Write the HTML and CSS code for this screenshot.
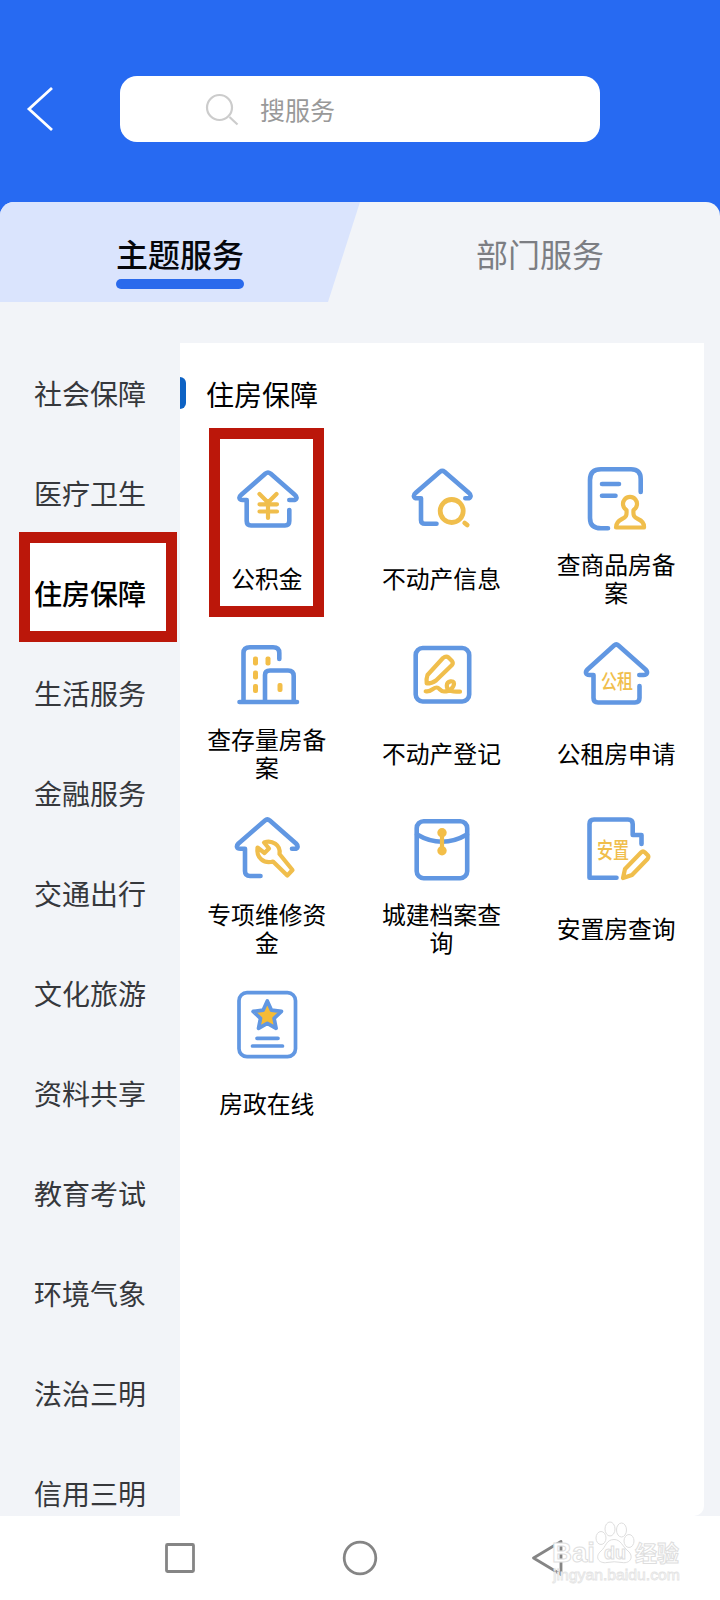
FILE: index.html
```html
<!DOCTYPE html>
<html lang="zh-CN">
<head>
<meta charset="utf-8">
<title>主题服务</title>
<link rel="stylesheet" href="styles.css">
</head>
<body>
<div class="screen">
  <header class="header">
    <svg class="back" width="30" height="46" viewBox="0 0 30 46"><path d="M27 2 4 23 27 44"/></svg>
    <div class="search">
      <svg class="search-icon" width="34" height="34" viewBox="0 0 34 34"><circle cx="14.500" cy="15.500" r="12.500"/><path d="m24.500 25 8 7.500"/></svg>
      <span>搜服务</span>
    </div>
  </header>
  <nav class="tabs">
    <svg class="tab-shape" width="360" height="100" viewBox="0 0 360 100"><path d="M0 0H360L328 100H0Z"/></svg>
    <div class="tab active"><span>主题服务</span></div>
    <div class="tab"><span>部门服务</span></div>
  </nav>
  <main class="content">
    <aside class="sidebar">
      <div class="cat">社会保障</div>
      <div class="cat">医疗卫生</div>
      <div class="cat selected"><span class="mark mark-cat"></span><b>住房保障</b></div>
      <div class="cat">生活服务</div>
      <div class="cat">金融服务</div>
      <div class="cat">交通出行</div>
      <div class="cat">文化旅游</div>
      <div class="cat">资料共享</div>
      <div class="cat">教育考试</div>
      <div class="cat">环境气象</div>
      <div class="cat">法治三明</div>
      <div class="cat">信用三明</div>
    </aside>
    <section class="panel">
      <h2 class="title">住房保障</h2>
      <div class="grid">
        <div class="item"><span class="mark mark-item"></span>
          <svg class="icon" viewBox="0 0 80 80"><path d="M62.300 41H66C70 41 70.500 38 68 36L43.500 14.500Q41 12.500 38.500 14.500L14 36C11.500 38 12 41 15.500 41H19.700V62Q19.700 66.500 24 66.500H58Q62.300 66.500 62.300 62V51"/><path class="y" d="m32.500 35 8.500 8.500 8.500-8.500M32.500 45.300H50M32.500 52.500H50M41 44V59"/></svg>
          <p>公积金</p></div>
        <div class="item">
          <svg class="icon" viewBox="0 0 80 80"><path d="M63.300 39.300H65.500C69 39.300 69.500 36 67 34L42.500 12.800Q40.300 11 38 12.800L13.500 34C11 36 11.500 39.300 15 39.300H19V61Q19 64.800 23 64.800H34.500"/><g class="y thick"><circle cx="49.700" cy="52" r="11.500"/><path d="m62.700 64 2.500 2"/></g></svg>
          <p>不动产信息</p></div>
        <div class="item">
          <svg class="icon" viewBox="0 0 80 80"><path d="M63.700 33V20Q63.700 10.300 54 10.300H24Q13 10.300 13 21V59Q13 69.300 24 69.300H31M25 25H42M25 36.700H38.500"/><path class="y" d="M49.500 51A7 7 0 1 1 56.500 51C56 57 57 58 61 60Q67.500 63 67 68.500H39Q39 63 45 60C49 58 50 57 49.500 51Z"/></svg>
          <p>查商品房备案</p></div>
        <div class="item">
          <svg class="icon" viewBox="0 0 80 80"><path d="M52.300 25V19Q52.300 13.300 46 13.300H23Q16.500 13.300 16.500 19V68M12.500 68H70M38 68V41Q38 36.500 43 36.500H61Q66.700 36.500 66.700 42V68"/><g class="win"><rect x="26" y="22.500" width="5" height="9" rx="2"/><rect x="38.500" y="22.500" width="5" height="9" rx="2"/><rect x="26" y="36.500" width="5" height="9" rx="2"/><rect x="26" y="50" width="5" height="9" rx="2"/><rect x="50.500" y="49" width="5" height="9" rx="2"/></g></svg>
          <p>查存量房备案</p></div>
        <div class="item">
          <svg class="icon" viewBox="0 0 80 80"><rect x="13.700" y="14" width="53.500" height="53.500" rx="7"/><path class="y" d="M24.700 49.500Q24 45 25.500 41L41 24Q44 21.500 46.500 23.500L50 27Q51.500 29 50 31L34 46.500Q30 49.500 24.700 49.500ZM23.700 57.300C29 58.500 31 53.500 34.700 53.500C37.500 53.500 38 57.500 42 57.500C48 57.500 52 53 52 49.500C52 46 45 46.500 44.800 51.500C44.700 56 48 57.700 58 57.700"/></svg>
          <p>不动产登记</p></div>
        <div class="item">
          <svg class="icon" viewBox="0 0 80 80"><path d="M62.300 41H66.500C70.500 41 71 38 68.500 35.500L41.500 11.500Q39.300 9.500 37 11.500L10.500 35.500C8 38 8.500 41 12.500 41H16.500V64Q16.500 68.500 21 68.500H58Q62.500 68.500 62.500 64V52"/><text class="glyph" transform="translate(24 54.500) scale(1 1.300)">公租</text></svg>
          <p>公租房申请</p></div>
        <div class="item">
          <svg class="icon" viewBox="0 0 80 80"><path d="M65 39.800H67.500C71 39.800 71.500 37 69 34.500L42.800 11.500Q40.300 9.500 38 11.500L11.500 34.500C9 37 9.500 39.800 13.500 39.800H18V62Q18 67 23 67H33.500"/><path class="y" d="M37 33.500C45 30.500 54 36 52.500 45L65.500 61 60.300 66.500 46 52.500C37 55 29 49 30.500 38.500L37.500 44 42 39.500Z"/></svg>
          <p>专项维修资金</p></div>
        <div class="item">
          <svg class="icon" viewBox="0 0 80 80"><rect x="14.700" y="12.200" width="50.500" height="57" rx="7"/><path d="M15 25.500Q40 40 65 25.500"/><path class="y" d="M40 24V42"/><g class="win"><circle cx="40" cy="23.700" r="4.700"/><circle cx="40" cy="41.700" r="4.700"/></g></svg>
          <p>城建档案查询</p></div>
        <div class="item">
          <svg class="icon" viewBox="0 0 80 80"><path d="M39.500 68.700H12.500V15Q12.500 10.500 17 10.500H51Q55.700 10.500 55.700 15V26H64.500V35"/><path class="y" d="M46 69 48 60 64 43.500Q66 41.500 68 43.500L71 46.500Q72 48 70.500 50L55 66Z"/><text class="glyph" transform="translate(20 48.500) scale(1 1.350)">安置</text></svg>
          <p>安置房查询</p></div>
        <div class="item">
          <svg class="icon thin" viewBox="0 0 80 80"><rect x="12" y="8.700" width="56.500" height="64" rx="8"/><path class="star" d="m40.300 17 4.200 9.200 10 1.200-7.400 6.900 2 10-8.800-5-8.800 5 2-10-7.400-6.900 10-1.200Z"/><path d="M30 54.300H51M25.500 62H55.500"/></svg>
          <p>房政在线</p></div>
      </div>
    </section>
  </main>
  <footer class="navbar">
    <svg width="720" height="84" viewBox="0 0 720 84">
      <g class="keys"><rect x="166.500" y="28.500" width="27" height="27" rx="1"/><circle cx="360" cy="42" r="15.800"/><path d="M561 25.500 533.500 42 561 58.500Z"/></g>
      <g class="wm">
        <text x="552" y="46" class="wm-b" textLength="43" lengthAdjust="spacingAndGlyphs">Bai</text>
        <ellipse cx="601" cy="22" rx="5" ry="6.500"/><ellipse cx="610" cy="13" rx="5" ry="7"/><ellipse cx="621.500" cy="14" rx="5" ry="7"/><ellipse cx="629" cy="25" rx="5" ry="6.500"/>
        <path d="M614 23.500C606 23.500 606 31 601 35C594 41 599 48 607 46.500Q614 45 622 46.500C631 48 634 40 628 35C622 30 621 23.500 614 23.500Z"/>
        <text x="604" y="43" class="wm-d">du</text>
        <text x="635" y="45" class="wm-c">经验</text>
        <text x="553" y="64" class="wm-u" textLength="127" lengthAdjust="spacingAndGlyphs">jingyan.baidu.com</text>
      </g>
    </svg>
  </footer>
</div>
</body>
</html>
```
FILE: styles.css
```css
* { box-sizing: border-box; }
body {
  margin: 0;
  font-family: "Noto Sans CJK SC", sans-serif;
  background: #fff;
}
p, h2 { margin: 0; font-weight: 400; }
.screen {
  width: 720px;
  height: 1600px;
  overflow: hidden;
  display: flex;
  flex-direction: column;
  background: linear-gradient(#276af2 302px, #f2f4f8 302px);
}
.header {
  height: 202px;
  padding: 76px 0 0 25px;
  display: flex;
  align-items: flex-start;
}
.back {
  margin-top: 10px;
  fill: none;
  stroke: #fff;
  stroke-width: 2.8;
}
.search {
  width: 480px;
  height: 66px;
  margin-left: 65px;
  padding-left: 85px;
  border-radius: 17px;
  background: #fff;
  display: flex;
  align-items: center;
  gap: 21px;
  color: #999;
  font-size: 25px;
  line-height: 36px;
}
.search-icon { fill: none; stroke: #ccc; stroke-width: 2.2; }
.tabs {
  position: relative;
  height: 100px;
  display: flex;
  border-radius: 14px 14px 0 0;
  overflow: hidden;
  background: #f2f4f8;
}
.tab-shape { position: absolute; left: 0; top: 0; fill: #dae4fd; }
.tab {
  position: relative;
  width: 360px;
  padding-top: 27px;
  display: flex;
  flex-direction: column;
  align-items: center;
  gap: 2px;
  font-size: 32px;
  line-height: 48px;
  color: #7c7e83;
}
.active { color: #05070c; font-weight: 500; }
.active::after {
  content: "";
  width: 128px;
  height: 10px;
  border-radius: 5px;
  background: #2a6aec;
}
.content {
  height: 1214px;
  display: flex;
  padding: 41px 16px 0 0;
  background: #f2f4f8;
}
.sidebar { width: 180px; }
.cat {
  position: relative;
  height: 100px;
  padding-left: 34px;
  font-size: 28px;
  line-height: 100px;
  color: #36383c;
  white-space: nowrap;
}
.selected { color: #000; }
.selected b { position: relative; font-weight: 500; }
.mark { position: absolute; border: 11px solid #bb170a; background: #fff; }
.mark-cat { left: 19px; top: -11px; width: 158px; height: 110px; }
.mark-item { left: 29px; top: -16px; width: 115px; height: 189px; }
.panel {
  width: 524px;
  background: #fff;
  border-bottom-right-radius: 10px;
}
.title {
  position: relative;
  height: 101px;
  padding-left: 26px;
  font-size: 28px;
  line-height: 102px;
  color: #000;
}
.title::before {
  content: "";
  position: absolute;
  left: 0;
  top: 34px;
  width: 6px;
  height: 32px;
  border-radius: 0 6px 6px 0;
  background: #0d62c4;
}
.grid {
  display: grid;
  grid-template-columns: repeat(3, 1fr);
  grid-auto-rows: 175px;
}
.item {
  position: relative;
  padding-top: 15px;
  display: flex;
  flex-direction: column;
  align-items: center;
}
.item p {
  position: relative;
  width: 125px;
  height: 56px;
  margin: 11px 1px 0 0;
  display: flex;
  align-items: center;
  justify-content: center;
  text-align: center;
  font-size: 23.8px;
  line-height: 28px;
  color: #000;
}
.icon {
  position: relative;
  width: 80px;
  height: 80px;
  flex: none;
  fill: none;
  stroke: #6197e2;
  stroke-width: 4.6;
  stroke-linecap: round;
  stroke-linejoin: round;
}
.thin { stroke-width: 3.7; }
.y { stroke: #f0be4c; stroke-width: 4.2; }
.thick { stroke-width: 4.8; }
.win { fill: #f3be48; stroke: none; }
.star { fill: #f5bb35; }
.glyph { font-size: 16px; fill: #f0be4c; stroke: none; font-weight: 500; }
.navbar { height: 84px; background: #fff; }
.navbar svg { display: block; }
.keys { fill: none; stroke: #858585; stroke-width: 2.8; stroke-linejoin: round; }
.wm { fill: #fff; stroke: #dedede; stroke-width: 1; font-family: "Liberation Sans", "Noto Sans CJK SC", sans-serif; }
.wm-b { font-size: 28px; font-weight: 700; }
.wm-d { font-size: 18px; font-weight: 700; }
.wm-c { font-size: 22px; font-weight: 700; }
.wm-u { font-size: 15px; stroke: #e4e4e4; stroke-width: 0.8; }
```
